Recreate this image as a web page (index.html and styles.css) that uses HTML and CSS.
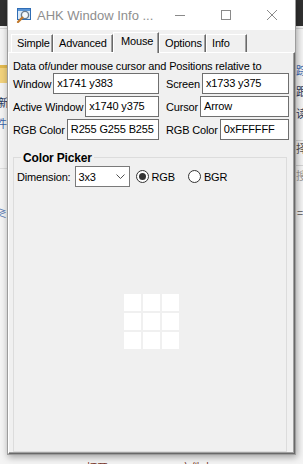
FILE: index.html
```html
<!DOCTYPE html>
<html>
<head>
<meta charset="utf-8">
<title>AHK Window Info</title>
<link rel="stylesheet" href="styles.css">
</head>
<body>
<div class="desktop">
  <div class="topbar"></div>
  <div class="topline"></div>

  <div class="bgbit folder"></div>
  <span class="bgbit gl gl-l1">新</span>
  <span class="bgbit gl gl-l2">件</span>
  <span class="bgbit gl gl-l3">≷</span>
  <div class="bgbit hline hl-l1"></div>

  <span class="bgbit gl gl-r1">踪</span>
  <span class="bgbit gl gl-r2">跟</span>
  <span class="bgbit gl gl-r3">读</span>
  <div class="bgbit hline hl-r1"></div>
  <span class="bgbit gl gl-r4">择</span>
  <div class="bgbit hline hl-r2"></div>
  <span class="bgbit gl gl-r5">搜</span>
  <span class="bgbit gl gl-r6">=</span>

  <span class="bgbit gl gl-b1">打开</span>
  <span class="bgbit gl gl-b2">文件夹</span>

  <div class="window">
    <div class="titlebar">
      <svg class="appicon" viewBox="0 0 16 16">
        <rect x="1.5" y="1.5" width="13" height="11" fill="#dbeaf8" stroke="#2f6db5"/>
        <rect x="2" y="2" width="12" height="2" fill="#5b95d6"/>
        <circle cx="9" cy="8" r="3.6" fill="#f4f8fc" stroke="#6b7b8c" stroke-width="1.4"/>
        <line x1="6.4" y1="10.6" x2="2" y2="15" stroke="#c0782c" stroke-width="2.2" stroke-linecap="round"/>
      </svg>
      <span class="title">AHK Window Info ...</span>
      <div class="caps">
        <span class="cap"><svg viewBox="0 0 10 10"><line x1="0" y1="5.5" x2="10" y2="5.5" stroke="#8a8a8a"/></svg></span>
        <span class="cap"><svg viewBox="0 0 10 10"><rect x="0.5" y="0.5" width="9" height="9" fill="none" stroke="#8a8a8a"/></svg></span>
        <span class="cap"><svg viewBox="0 0 10 10"><path d="M0 0L10 10M10 0L0 10" stroke="#8a8a8a" stroke-width="1"/></svg></span>
      </div>
    </div>

    <div class="tabstrip">
      <span class="tab t-simple">Simple</span>
      <span class="tab t-adv">Advanced</span>
      <span class="tab t-mouse sel">Mouse</span>
      <span class="tab t-opt">Options</span>
      <span class="tab t-info">Info</span>
    </div>

    <div class="panel">
      <p class="intro">Data of/under mouse cursor and Positions relative to</p>
      <div class="rows">
        <div class="row">
          <div class="cell c1"><span class="lbl">Window</span><span class="edit">x1741 y383</span></div>
          <div class="cell c2"><span class="lbl">Screen</span><span class="edit">x1733 y375</span></div>
        </div>
        <div class="row">
          <div class="cell c1"><span class="lbl">Active Window</span><span class="edit">x1740 y375</span></div>
          <div class="cell c2"><span class="lbl">Cursor</span><span class="edit">Arrow</span></div>
        </div>
        <div class="row">
          <div class="cell c1"><span class="lbl">RGB Color</span><span class="edit">R255 G255 B255</span></div>
          <div class="cell c2"><span class="lbl">RGB Color</span><span class="edit">0xFFFFFF</span></div>
        </div>
      </div>

      <div class="group">
        <span class="legend">Color Picker</span>
        <div class="dimrow">
          <span class="lbl">Dimension:</span>
          <span class="select">3x3<svg class="chev" viewBox="0 0 9 5"><path d="M0.5 0.5L4.5 4.5L8.5 0.5" fill="none" stroke="#505050"/></svg></span>
          <span class="radio r-rgb"><span class="circle on"></span><span class="rlbl">RGB</span></span>
          <span class="radio r-bgr"><span class="circle"></span><span class="rlbl">BGR</span></span>
        </div>
        <div class="swatches">
          <span class="sw"></span><span class="sw"></span><span class="sw"></span>
          <span class="sw"></span><span class="sw"></span><span class="sw"></span>
          <span class="sw"></span><span class="sw"></span><span class="sw"></span>
        </div>
      </div>
    </div>
  </div>
</div>
</body>
</html>
```

FILE: styles.css
```css
* { box-sizing: border-box; }
html, body { margin: 0; padding: 0; }
body {
  width: 303px;
  height: 464px;
  overflow: hidden;
  font-family: "Liberation Sans", Arial, sans-serif;
  font-size: 11px;
  letter-spacing: -0.15px;
  color: #000;
}
.desktop {
  position: relative;
  width: 303px;
  height: 464px;
  background: #f4f4f4;
  overflow: hidden;
}
.topbar { height: 26px; background: #303030; }
.topline { height: 1px; margin-top: 2px; background: #d6d6d6; }

/* fragments of other windows behind */
.bgbit { position: absolute; }
.gl {
  font-family: "Noto Sans CJK SC", "Liberation Sans", sans-serif;
  font-size: 11px;
  line-height: 12px;
  letter-spacing: 0;
  white-space: nowrap;
}
.folder { left: -5px; top: 65px; width: 12px; height: 18px; background: #f2d27c; border-top: 3px solid #e2b94f; }
.gl-l1 { left: -2px; top: 96px; color: #23335a; }
.gl-l2 { left: -4px; top: 117px; color: #3a62a8; }
.gl-l3 { left: -4px; top: 206px; color: #5a78b0; }
.hl-l1 { left: 0; top: 168px; width: 7px; height: 1px; background: #dedede; }
.gl-r1 { left: 296px; top: 64px; color: #3a6cb5; }
.gl-r2 { left: 296px; top: 85px; color: #2c3a5a; }
.gl-r3 { left: 296px; top: 107px; color: #2c3a5a; }
.hl-r1 { left: 296px; top: 140px; width: 7px; height: 1px; background: #d4d4d4; }
.gl-r4 { left: 296px; top: 142px; color: #555; }
.hl-r2 { left: 296px; top: 165px; width: 7px; height: 1px; background: #d4d4d4; }
.gl-r5 { left: 296px; top: 169px; color: #999; }
.gl-r6 { left: 297px; top: 206px; color: #555; }
.gl-b1 { left: 86px; top: 461px; color: #7a3b2e; }
.gl-b2 { left: 180px; top: 461px; color: #7a3b2e; }

/* window */
.window {
  position: absolute;
  left: 7px;
  top: -1px;
  width: 289px;
  height: 456px;
  border: 1px solid #9c9c9c;
  background: #f0f0f0;
  box-shadow: 1px 2px 7px rgba(0, 0, 0, 0.35);
  display: flex;
  flex-direction: column;
}
.titlebar {
  flex: none;
  height: 30px;
  background: #fff;
  display: flex;
  align-items: center;
}
.appicon { flex: none; width: 16px; height: 16px; margin-left: 8px; }
.title { margin-left: 5px; font-size: 13px; letter-spacing: 0; color: #8e8e8e; white-space: nowrap; }
.caps { margin-left: auto; display: flex; height: 30px; }
.cap { width: 46px; height: 30px; display: flex; align-items: center; justify-content: center; }
.cap svg { width: 10px; height: 10px; display: block; }

/* tabs */
.tabstrip {
  flex: none;
  position: relative;
  z-index: 1;
  height: 22px;
  display: flex;
  align-items: flex-end;
  padding-left: 3px;
}
.tab {
  height: 18px;
  border-top: 1px solid #fff;
  border-left: 1px solid #fff;
  border-right: 1px solid #696969;
  box-shadow: inset -1px 0 #a0a0a0;
  padding-left: 5px;
  line-height: 16px;
  white-space: nowrap;
  background: #f0f0f0;
}
.tab.sel { height: 21px; margin-bottom: -1px; padding-left: 7px; }
.t-simple { width: 42px; }
.t-adv { width: 60px; }
.t-mouse { width: 46px; }
.t-opt { width: 47px; }
.t-info { width: 41px; }

.panel {
  flex: 1;
  border-top: 1px solid #fff;
  border-left: 1px solid #fff;
  border-right: 1px solid #696969;
  border-bottom: 1px solid #696969;
  box-shadow: inset -1px -1px #a0a0a0;
  padding: 7px 0 0 4px;
}
.intro { margin: 0; line-height: 13px; white-space: nowrap; }
.rows { display: flex; flex-direction: column; gap: 2px; }
.row { display: flex; height: 21px; }
.cell { display: flex; align-items: center; }
.c1 { width: 146px; }
.c2 { width: 123px; margin-left: 7px; }
.lbl { white-space: nowrap; }
.edit {
  flex: 1;
  height: 21px;
  margin-left: 2px;
  padding: 0 3px;
  background: #fff;
  border: 1px solid #6f6f6f;
  line-height: 19px;
  white-space: nowrap;
  overflow: hidden;
}

/* group box */
.group {
  position: relative;
  margin-top: 17px;
  width: 274px;
  height: 295px;
  border: 1px solid #dcdcdc;
}
.legend {
  position: absolute;
  top: -7px;
  left: 7px;
  padding: 0 2px;
  background: #f0f0f0;
  font-size: 12px;
  font-weight: bold;
  line-height: 14px;
  white-space: nowrap;
}
.dimrow {
  display: flex;
  align-items: center;
  height: 21px;
  margin: 8px 0 0 3px;
}
.select {
  display: flex;
  align-items: center;
  width: 55px;
  height: 21px;
  margin-left: 4px;
  padding-left: 3px;
  background: #fff;
  border: 1px solid #7a7a7a;
}
.chev { width: 9px; height: 5px; margin-left: auto; margin-right: 4px; display: block; }
.radio { display: flex; align-items: center; }
.r-rgb { margin-left: 6px; }
.r-bgr { margin-left: 13px; }
.circle {
  width: 13px;
  height: 13px;
  border: 1px solid #333;
  border-radius: 50%;
  background: #fff;
  display: flex;
  align-items: center;
  justify-content: center;
}
.circle.on::after {
  content: "";
  width: 7px;
  height: 7px;
  border-radius: 50%;
  background: #333;
}
.rlbl { margin-left: 3px; }
.swatches {
  display: grid;
  grid-template-columns: repeat(3, 17px);
  grid-auto-rows: 17px;
  gap: 2px;
  margin: 107px 0 0 110px;
}
.sw { background: #fff; }
```
